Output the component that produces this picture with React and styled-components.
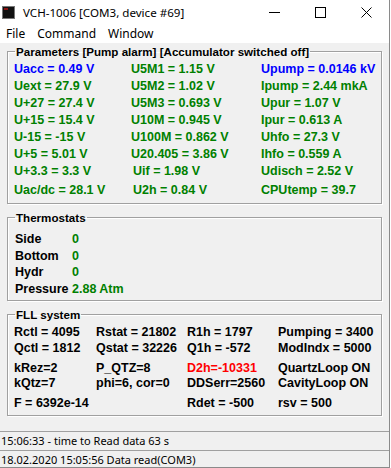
import styled, { createGlobalStyle } from 'styled-components'

const GlobalStyle = createGlobalStyle`
  html, body {
    margin: 0;
    padding: 0;
    background: #ffffff;
  }
  * {
    box-sizing: border-box;
  }
`

const params = [
  [
    { text: 'Uacc = 0.49 V', color: 'blue' },
    { text: 'U5M1 = 1.15 V' },
    { text: 'Upump = 0.0146 kV', color: 'blue' },
  ],
  [{ text: 'Uext = 27.9 V' }, { text: 'U5M2 = 1.02 V' }, { text: 'Ipump = 2.44 mkA' }],
  [{ text: 'U+27 = 27.4 V' }, { text: 'U5M3 = 0.693 V' }, { text: 'Upur = 1.07 V' }],
  [{ text: 'U+15 = 15.4 V' }, { text: 'U10M = 0.945 V' }, { text: 'Ipur = 0.613 A' }],
  [{ text: 'U-15 = -15 V' }, { text: 'U100M = 0.862 V' }, { text: 'Uhfo = 27.3 V' }],
  [{ text: 'U+5 = 5.01 V' }, { text: 'U20.405 = 3.86 V' }, { text: 'Ihfo = 0.559 A' }],
  [{ text: 'U+3.3 = 3.3 V' }, { text: 'Uif = 1.98 V', shift: true }, { text: 'Udisch = 2.52 V' }],
  [{ text: 'Uac/dc = 28.1 V' }, { text: 'U2h = 0.84 V', shift: true }, { text: 'CPUtemp = 39.7' }],
]

const thermostats = [
  ['Side', '0'],
  ['Bottom', '0'],
  ['Hydr', '0'],
  ['Pressure', '2.88 Atm'],
]

const fll = [
  ['Rctl = 4095', 'Rstat = 21802', 'R1h = 1797', 'Pumping = 3400'],
  ['Qctl = 1812', 'Qstat = 32226', 'Q1h = -572', 'ModIndx = 5000'],
  ['kRez=2', 'P_QTZ=8', 'D2h=-10331', 'QuartzLoop ON'],
  ['kQtz=7', 'phi=6, cor=0', 'DDSerr=2560', 'CavityLoop ON'],
  ['F = 6392e-14', '', 'Rdet = -500', 'rsv = 500'],
]

const AppIcon = () => (
  <svg width='13' height='13' viewBox='0 0 13 13'>
    <rect x='0.5' y='0.5' width='12' height='12' fill='#111' stroke='#777' />
    <rect x='2' y='2' width='4' height='2' fill='#8a1010' />
  </svg>
)

const App = () => {
  return (
    <Window>
      <GlobalStyle />
      <TitleBar>
        <AppIcon />
        <Title>VCH-1006 [COM3, device #69]</Title>
        <Controls>
          <CtlButton>
            <svg width='11' height='11' viewBox='0 0 11 11'>
              <line x1='0' y1='5.5' x2='11' y2='5.5' stroke='#000' />
            </svg>
          </CtlButton>
          <CtlButton>
            <svg width='11' height='11' viewBox='0 0 11 11'>
              <rect x='0.5' y='0.5' width='10' height='10' fill='none' stroke='#000' />
            </svg>
          </CtlButton>
          <CtlButton>
            <svg width='11' height='11' viewBox='0 0 11 11'>
              <path d='M0.5 0.5 L10.5 10.5 M10.5 0.5 L0.5 10.5' stroke='#000' />
            </svg>
          </CtlButton>
        </Controls>
      </TitleBar>
      <MenuBar>
        <MenuItem>File</MenuItem>
        <MenuItem>Command</MenuItem>
        <MenuItem>Window</MenuItem>
      </MenuBar>
      <Client>
        <Group pb={6}>
          <Legend>Parameters [Pump alarm] [Accumulator switched off]</Legend>
          <ParamGrid>
            {params.map((row, i) =>
              row.map((cell, j) => (
                <Cell key={`${i}-${j}`} color={cell.color} shift={cell.shift} last={i === params.length - 1}>
                  {cell.text}
                </Cell>
              ))
            )}
          </ParamGrid>
        </Group>
        <Group pb={3}>
          <Legend>Thermostats</Legend>
          <ThermoGrid>
            {thermostats.map(([label, value]) => [
              <Cell key={label} color='black'>{label}</Cell>,
              <Cell key={label + 'v'}>{value}</Cell>,
            ])}
          </ThermoGrid>
        </Group>
        <Group pb={3}>
          <Legend>FLL system</Legend>
          <FllGrid>
            {fll.map((row, i) =>
              row.map((text, j) => (
                <Cell key={`${i}-${j}`} color={text.startsWith('D2h') ? 'red' : 'black'}>
                  {text}
                </Cell>
              ))
            )}
          </FllGrid>
        </Group>
      </Client>
      <StatusPanel>15:06:33 - time to Read data 63 s</StatusPanel>
      <StatusPanel last>18.02.2020 15:05:56 Data read(COM3)</StatusPanel>
    </Window>
  )
}
export default App

const colors = {
  green: '#008000',
  blue: '#0000ff',
  red: '#ff0000',
  black: '#000000',
}

const Window = styled.div`
  width: 390px;
  height: 468px;
  display: flex;
  flex-direction: column;
  border-right: 1px solid #8a8a8a;
  background: #ffffff;
  font-family: 'Noto Sans', 'Liberation Sans', sans-serif;
`

const TitleBar = styled.div`
  height: 24px;
  display: flex;
  align-items: center;
  padding-left: 2px;
  background: #ffffff;
`

const Title = styled.span`
  margin-left: 8px;
  font-size: 11.6px;
  color: #000;
  flex: 1;
`

const Controls = styled.div`
  display: flex;
  height: 100%;
`

const CtlButton = styled.div`
  width: 46px;
  display: flex;
  align-items: center;
  justify-content: center;
`

const MenuBar = styled.div`
  height: 19px;
  display: flex;
  align-items: center;
  background: #ffffff;
`

const MenuItem = styled.span`
  padding: 0 6px;
  font-size: 12px;
  color: #000;
`

const Client = styled.div`
  flex: 1;
  background: #f0f0f0;
  padding: 2px 7px 0 7px;
  display: flex;
  flex-direction: column;
  gap: 7px;
`

const Group = styled.fieldset`
  margin: 0;
  padding: 0 0 ${({ pb }) => pb}px 6px;
  border: 1px solid #a0a0a0;
  box-shadow: inset 1px 1px 0 #ffffff, 1px 1px 0 #ffffff;
  min-width: 0;
`

const Legend = styled.legend`
  padding: 0 1px;
  margin-left: 1px;
  font-family: 'Liberation Sans', Arial, sans-serif;
  font-weight: bold;
  font-size: 11.6px;
  line-height: 13px;
  color: #000;
`

const ParamGrid = styled.div`
  display: grid;
  grid-template-columns: 117px 130px 1fr;
  grid-auto-rows: 17px;
  padding-top: 3px;
`

const ThermoGrid = styled.div`
  display: grid;
  grid-template-columns: 57px 1fr;
  grid-auto-rows: 16.5px;
  padding: 7px 0 0 1px;
`

const FllGrid = styled.div`
  display: grid;
  grid-template-columns: 82px 91px 91px 1fr;
  grid-template-rows: 16px 20px 15px 20px 17px;
  padding-top: 3px;
`

const Cell = styled.div`
  font-family: 'Liberation Sans', Arial, sans-serif;
  font-weight: bold;
  font-size: 12.5px;
  line-height: 17px;
  white-space: nowrap;
  color: ${({ color }) => colors[color] || colors.green};
  padding-left: ${({ shift }) => (shift ? '2px' : '0')};
  margin-top: ${({ last }) => (last ? '2px' : '0')};
`

const StatusPanel = styled.div`
  height: ${({ last }) => (last ? '18px' : '19px')};
  background: #f0f0f0;
  border-top: 1px solid #a0a0a0;
  border-bottom: ${({ last }) => (last ? '1px solid #8a8a8a' : 'none')};
  padding-left: 1px;
  font-size: 11px;
  line-height: 17px;
  color: #000;
  white-space: nowrap;
`
